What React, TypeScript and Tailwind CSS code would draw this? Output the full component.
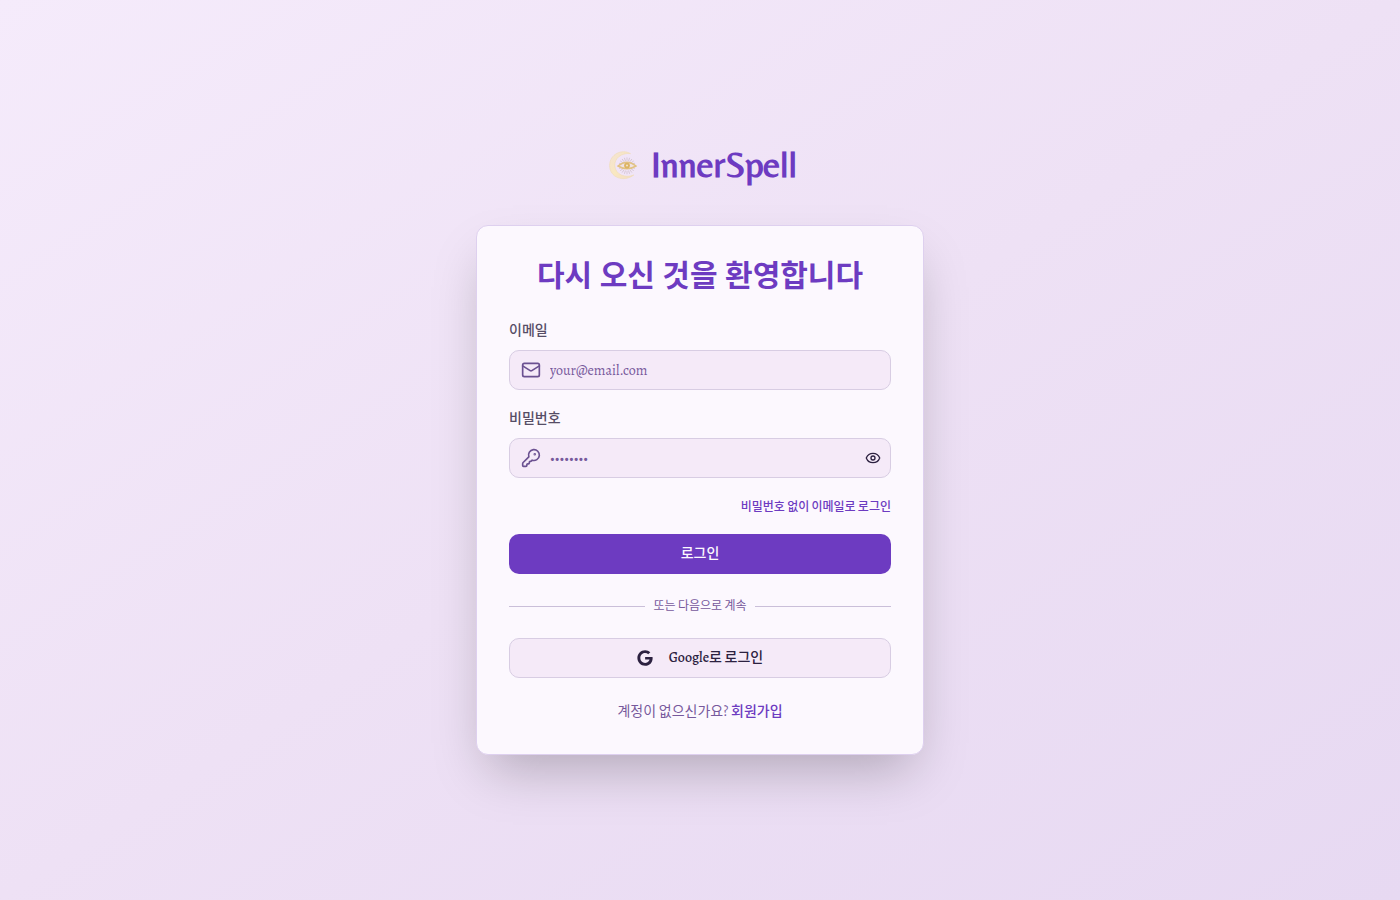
import { useState } from 'react';
import { Eye, EyeOff, KeyRound, Mail } from 'lucide-react';

const rays = Array.from({ length: 20 }, (_, i) => i * 18);

function MoonEye() {
  return (
    <svg viewBox="0 0 40 40" className="size-10" aria-hidden="true">
      <defs>
        <linearGradient id="moon" x1="0" y1="0" x2="1" y2="1">
          <stop offset="0" stopColor="#f3e2d6" />
          <stop offset="0.5" stopColor="#f9e8c0" />
          <stop offset="1" stopColor="#f2dcc6" />
        </linearGradient>
      </defs>
      <path
        d="M27.5 8.6C19 3.6 6.6 9 6.6 20.6C6.6 32 20 38 30.8 30C22 33.6 12.6 29.4 11.8 21C11.2 13.6 18 7.6 27.5 8.6Z"
        fill="url(#moon)"
        stroke="#f0dcb4"
        strokeWidth="0.6"
      />
      <g stroke="#c9b7c4" strokeWidth="0.6">
        {rays.map((a) => (
          <line key={a} x1="24" y1="15.8" x2="24" y2="12.4" transform={`rotate(${a} 24 20.8)`} />
        ))}
      </g>
      <path d="M15 21Q24 13.4 33 21Q24 26.6 15 21Z" fill="#f0e2e4" stroke="#e2c283" strokeWidth="1.5" />
      <circle cx="24" cy="20.6" r="2.9" fill="#dcb462" />
      <circle cx="24" cy="20.6" r="1" fill="#f3e4cf" />
    </svg>
  );
}

function GoogleMark() {
  return (
    <svg viewBox="0 0 488 512" className="size-4" fill="currentColor" aria-hidden="true">
      <path d="M488 261.8C488 403.3 391.1 504 248 504 110.8 504 0 393.2 0 256S110.8 8 248 8c66.8 0 123 24.5 166.3 64.9l-67.5 64.9C258.5 52.6 94.3 116.6 94.3 256c0 86.5 69.1 156.6 153.7 156.6 98.2 0 135-70.4 140.8-106.9H248v-85.3h236.1c2.3 12.7 3.9 24.9 3.9 41.4z" />
    </svg>
  );
}

const inputClass =
  'h-10 w-full rounded-[10px] border border-[#d8cde3] bg-[#f5eaf8] pl-10 text-sm text-[#2c2140] outline-none placeholder:text-[#77599c] focus:border-[#6d3bc1]';

export default function App() {
  const [visible, setVisible] = useState(false);

  return (
    <main className="flex min-h-screen flex-col items-center justify-center bg-linear-to-br from-[#f5ebfb] via-[#eee1f5] to-[#e7d9f2] px-4 font-['Alegreya','Liberation_Serif','Noto_Sans_CJK_KR',serif] text-[#2c2140]">
      <a href="#" className="mb-10 flex items-center gap-2 text-[#6d3bc1]">
        <MoonEye />
        <span className="font-['Belleza','Lato','Noto_Sans_CJK_KR',sans-serif] text-4xl leading-10 font-bold">
          InnerSpell
        </span>
      </a>

      <section className="w-full max-w-md rounded-xl border border-[#ded0ef] bg-[#fcf8fe] p-8 shadow-2xl">
        <h1 className="mb-6 text-center font-['Belleza','Lato','Noto_Sans_CJK_KR',sans-serif] text-3xl leading-9 font-bold text-[#6d3bc1]">
          다시 오신 것을 환영합니다
        </h1>

        <form className="flex flex-col gap-4" onSubmit={(e) => e.preventDefault()}>
          <div className="flex flex-col gap-2">
            <div className="leading-6">
              <label htmlFor="email" className="text-sm font-medium text-[#564d66]">
                이메일
              </label>
            </div>
            <div className="relative">
              <Mail className="absolute top-1/2 left-3 size-5 -translate-y-1/2 text-[#6b5191]" />
              <input id="email" type="email" placeholder="your@email.com" className={inputClass} />
            </div>
          </div>

          <div className="flex flex-col gap-2">
            <div className="leading-6">
              <label htmlFor="password" className="text-sm font-medium text-[#564d66]">
                비밀번호
              </label>
            </div>
            <div className="relative">
              <KeyRound className="absolute top-1/2 left-3 size-5 -translate-y-1/2 text-[#6b5191]" />
              <input
                id="password"
                type={visible ? 'text' : 'password'}
                placeholder="••••••••"
                className={inputClass}
              />
              <button
                type="button"
                aria-label="비밀번호 표시"
                onClick={() => setVisible(!visible)}
                className="absolute top-1/2 right-1 flex size-7 -translate-y-1/2 items-center justify-center"
              >
                {visible ? <EyeOff className="size-4" /> : <Eye className="size-4" />}
              </button>
            </div>
          </div>

          <div className="h-6 text-right leading-6">
            <a href="#" className="text-xs font-medium text-[#6d3bc1]">
              비밀번호 없이 이메일로 로그인
            </a>
          </div>

          <button type="submit" className="h-10 rounded-[10px] bg-[#6d3bc1] text-sm font-medium text-[#fcf8fe]">
            로그인
          </button>
        </form>

        <div className="my-6 flex items-center gap-2 text-xs leading-4 text-[#77599c]">
          <span className="h-px flex-1 bg-[#cabfd9]" />
          또는 다음으로 계속
          <span className="h-px flex-1 bg-[#cabfd9]" />
        </div>

        <button
          type="button"
          className="flex h-10 w-full items-center justify-center gap-4 rounded-[10px] border border-[#d8cde3] bg-[#f5eaf8] text-sm font-medium"
        >
          <GoogleMark />
          Google로 로그인
        </button>

        <p className="mt-6 text-center text-sm leading-5 text-[#77599c]">
          계정이 없으신가요?{' '}
          <a href="#" className="font-medium text-[#6d3bc1]">
            회원가입
          </a>
        </p>
      </section>
    </main>
  );
}
